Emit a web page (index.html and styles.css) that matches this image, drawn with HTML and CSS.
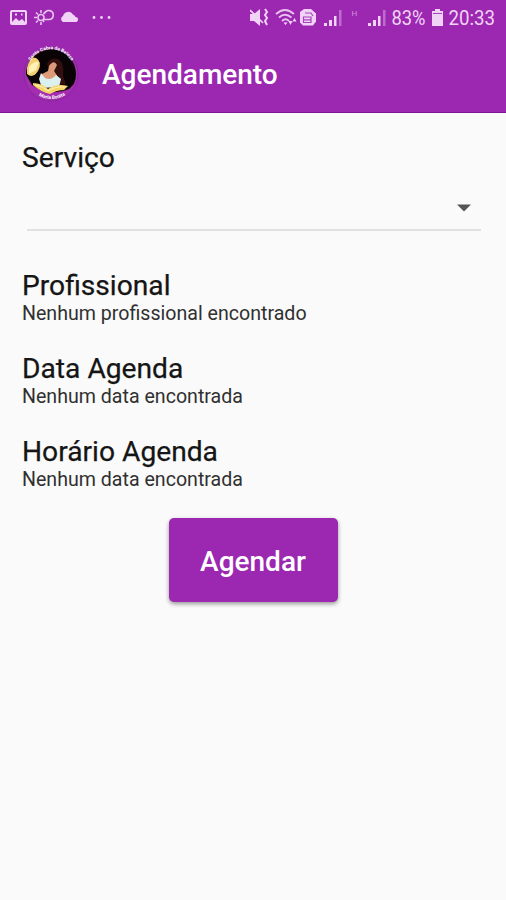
FILE: index.html
```html
<!DOCTYPE html>
<html lang="pt-BR">
<head>
<meta charset="utf-8">
<title>Agendamento</title>
<link rel="stylesheet" href="styles.css">
</head>
<body>
<header class="appbar">
  <div class="status">
    <svg class="status-left" width="120" height="36" viewBox="0 0 120 36" fill="#f1d3f7">
      <path fill-rule="evenodd" d="M12 10h13q2 0 2 2v11q0 2-2 2H12q-2 0-2-2V12q0-2 2-2zm0 2v10l4-4 3 3 3-2 3 3V12zm3 1.500h2v2h-2zm6 0h1.500v2H21z"/>
      <g fill="none" stroke="#e9c3f0" stroke-width="1.600">
        <circle cx="41" cy="17.500" r="3"/>
        <path d="M41 10v3M41 22v3M34 17.500h3M36 12.500l2 2M36 22.500l2-2M45 12l-1.500 2M44 22l-1-1.500M43 19.500h6a4.500 4.500 0 1 0-4.500-6"/>
      </g>
      <path d="M63 22a3.300 3.300 0 0 1 0-6 5.500 5.500 0 0 1 10-1.500 4 4 0 0 1 2.500 2.500 2.600 2.600 0 0 1 1 5z"/>
      <circle cx="94" cy="17.500" r="1.400"/><circle cx="101.500" cy="17.500" r="1.400"/><circle cx="109" cy="17.500" r="1.400"/>
    </svg>
    <svg class="status-right" width="256" height="36" viewBox="250 0 256 36" fill="#f1d3f7">
      <path d="M250 14h4l6-5v17l-6-5h-4z"/>
      <path d="M250 10l13 13" stroke="#f1d3f7" stroke-width="1.600"/>
      <path d="M265 9l2 3-2 3 2 3-2 3 2 4" fill="none" stroke="#f1d3f7" stroke-width="2"/>
      <g fill="none" stroke="#e9c3f0" stroke-width="1.800">
        <path d="M276 14q9-8 18 0M279 17.500q6-5.500 12.500 0M282 21q3.500-3.500 7 0"/>
      </g>
      <path d="M283.500 22.500h4l-2 2.500zM288.500 21l2 4 2-4zM292.500 21.500l2-3.500 2 3.500z"/>
      <path d="M304 9h7l5 4.500v8l-3 4h-10l-3-3V12z"/>
      <path d="M305 13h6l2 3M303.500 17h7.500v5.500h-7.500zM303.500 19.800h7.500" fill="none" stroke="#a843bb" stroke-width="1.200"/>
      <path d="M324 23h3v3h-3zM329 20h3v6h-3zM334 16h2.500v10H334z"/>
      <path d="M339 10h2.500v16H339z" opacity=".4"/>
      <text class="network" x="351.500" y="15.500">H</text>
      <path d="M368 23h3v3h-3zM373 20h3v6h-3zM378 16h2.500v10H378z"/>
      <path d="M383 10h2.500v16H383z" opacity=".4"/>
      <text class="reading" x="391.500" y="25.300" textLength="34" lengthAdjust="spacingAndGlyphs">83%</text>
      <path d="M435 9h5v2h3v15h-11V11h3z"/>
      <path d="M433 13.500h9" stroke="#a843bb" stroke-width="1"/>
      <text class="reading" x="448.500" y="25.300" textLength="46.500" lengthAdjust="spacingAndGlyphs">20:33</text>
    </svg>
  </div>
  <div class="toolbar">
    <svg class="logo" width="56" height="56" viewBox="0 0 56 56">
      <defs>
        <path id="top" d="M5 22A23.500 23.500 0 0 1 51 22"/>
        <path id="bottom" d="M12 47A25.500 25.500 0 0 0 46 46"/>
        <clipPath id="disc"><circle cx="28" cy="28" r="25"/></clipPath>
      </defs>
      <circle cx="28" cy="28" r="27" fill="#a52db0" stroke="#7b2b91" stroke-width=".8"/>
      <g clip-path="url(#disc)">
        <path d="M3 16Q28-12 53 16L55 34 46 43Q28 51 9 39L2 27z" fill="#090306"/>
        <path d="M4 22Q5 10 13 12 20 16 15 25 10 33 4 28z" fill="#f3cf72"/>
        <path d="M6 21q5-6 10-5l-3 8-7 4z" fill="#fff2b4"/>
        <path d="M24 18q3-7 11-5 7 4 5 17l3 8-12 2-6-7q3-8-1-15z" fill="#32100f"/>
        <path d="M26 20q5-7 8-1l-3 6 4 6-5 5-10-2-1-6 6-3z" fill="#dc9a79"/>
        <path d="M18 27l4 5q6 3 11-3l5 4-2 8-17 1-3-9z" fill="#dcf0ef"/>
        <path d="M10 37q9 0 15 6 8-6 20-3l-4 4q-7 0-14 4-9-2-17-9z" fill="#f7d468"/>
        <path d="M12 39q8 1 13 6 7-5 17-4" fill="none" stroke="#fff4bd" stroke-width="1"/>
      </g>
      <text class="logo-text"><textPath href="#top" startOffset="50%" text-anchor="middle">Santo Cabra da Beleza</textPath></text>
      <text class="logo-text"><textPath href="#bottom" startOffset="50%" text-anchor="middle">Maria Bonita</textPath></text>
    </svg>
    <h1 class="title">Agendamento</h1>
  </div>
</header>
<main class="form">
  <section class="service">
    <h2>Serviço</h2>
    <div class="select"><svg width="14" height="8" viewBox="0 0 14 8"><path d="M0 .5h14L7 7.500z" fill="#555"/></svg></div>
  </section>
  <section class="field"><h2>Profissional</h2><p>Nenhum profissional encontrado</p></section>
  <section class="field"><h2>Data Agenda</h2><p>Nenhum data encontrada</p></section>
  <section class="field"><h2>Horário Agenda</h2><p>Nenhum data encontrada</p></section>
  <button class="submit" type="button">Agendar</button>
</main>
</body>
</html>
```
FILE: styles.css
```css
* { box-sizing: border-box; }
body { margin: 0; min-height: 900px; background: #fafafa; color: #151515; font-family: Roboto, sans-serif; }
h1, h2, p { margin: 0; }
svg { display: block; flex: none; }
.appbar { height: 113px; background: #9c27b0; border-bottom: 1px solid #7e1594; }
.status { display: flex; justify-content: space-between; height: 36px; }
.reading { font: 400 21px Roboto, sans-serif; }
.network { font: 400 8px Roboto, sans-serif; opacity: .6; }
.toolbar { display: flex; align-items: center; gap: 23px; height: 76px; padding-left: 23px; }
.logo-text { font: 700 4.8px Roboto, sans-serif; fill: #fff; }
.title { padding-top: 2px; color: #fff; font-size: 28px; font-weight: 500; line-height: 34px; }
.form { display: flex; flex-direction: column; padding: 28px 22px; }
h2 { font-size: 28.2px; font-weight: 400; line-height: 34px; -webkit-text-stroke: .25px #151515; }
.service { height: 128px; }
.select { display: flex; justify-content: flex-end; align-items: center; height: 56px; margin: 0 3px 0 5px; padding: 12px 10px 0 0; border-bottom: 2px solid #e1e1e1; }
.field { height: 83px; }
.field p { font-size: 19.6px; line-height: 21px; color: #303030; }
.submit { align-self: center; width: 169px; height: 84px; padding: 2px 0 0; border: 0; border-radius: 5px; background: #9c27b0; color: #fff; font: 500 28px Roboto, sans-serif; box-shadow: 0 2px 4px #0006; }
```
